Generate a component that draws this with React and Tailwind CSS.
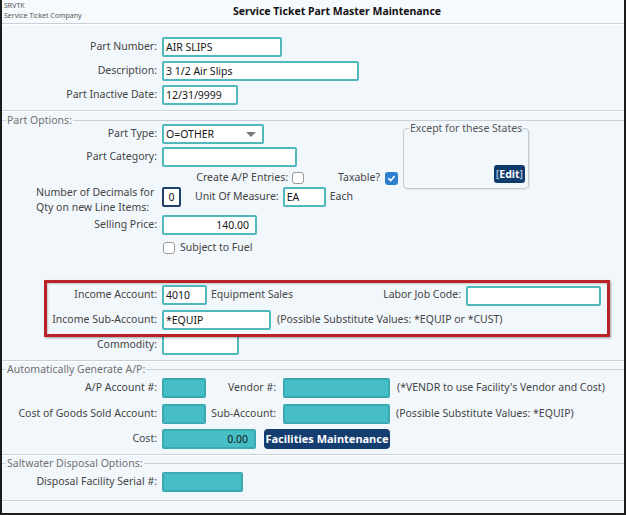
import React from 'react';

// Part master maintenance form
const lineColor = 'bg-[#c9d0d7]';

function Separator({ className = '' }) {
  return <div className={`h-[2px] border-t border-[#c9d0d7] border-b border-b-white ${className}`} />;
}

function Legend({ title, className = '' }) {
  return (
    <div className={`flex items-center h-[12px] ${className}`}>
      <div className={`w-[4px] h-px ${lineColor}`} />
      <span className="px-px text-[10.5px] leading-[12px] text-[#707070]">{title}</span>
      <div className={`flex-1 h-px ${lineColor}`} />
    </div>
  );
}

function Label({ children, className = 'w-[155px]' }) {
  return <span className={`shrink-0 text-right mr-[5px] text-[10.5px] text-[#444] ${className}`}>{children}</span>;
}

function Field({ value = '', w, right = false, teal = false }) {
  const tone = teal
    ? 'bg-[#47bec5] border-[#3aa9b1]'
    : 'bg-white border-[#4fb9bb]';
  return (
    <div
      className={`h-[20px] shrink-0 border-2 rounded-[2px] px-[2px] text-[10.5px] leading-[16px] text-[#151515] overflow-hidden ${tone} ${right ? 'text-right pr-[6px]' : ''} ${w}`}
    >
      {value}
    </div>
  );
}

function CheckBox({ checked = false }) {
  if (checked) {
    return (
      <div className="w-[13px] h-[13px] rounded-[3px] bg-[#2f7fcf] flex items-center justify-center shrink-0">
        <svg width="9" height="9" viewBox="0 0 10 10">
          <path d="M2 5.2 L4.2 7.3 L8 2.8" fill="none" stroke="white" strokeWidth="1.8" strokeLinecap="round" strokeLinejoin="round" />
        </svg>
      </div>
    );
  }
  return <div className="w-[12px] h-[12px] rounded-[3px] border border-[#9a9a9a] bg-white shrink-0" />;
}

export default function App() {
  return (
    <div className="relative w-[626px] h-[515px] overflow-hidden whitespace-nowrap bg-[#f2f7fc] border-x-2 border-b-2 border-[#1c1c1c] font-['Noto_Sans',sans-serif] text-[#444]">
      {/* header */}
      <div className="flex items-start h-[23px] bg-[#f7fafd]">
        <div className="w-[231px] shrink-0 pl-[2px] pt-px text-[7px] leading-[10px] text-[#555]">
          <div>SRVTK</div>
          <div>Service Ticket Company</div>
        </div>
        <div className="pt-[4px] text-[10.5px] leading-[15px] font-bold text-[#111]">Service Ticket Part Master Maintenance</div>
      </div>
      <Separator />

      {/* part header fields */}
      <div className="flex items-center mt-[12px]">
        <Label>Part Number:</Label>
        <Field value="AIR SLIPS" w="w-[120px]" />
      </div>
      <div className="flex items-center mt-[4px]">
        <Label>Description:</Label>
        <Field value="3 1/2 Air Slips" w="w-[197px]" />
      </div>
      <div className="flex items-center mt-[4px]">
        <Label>Part Inactive Date:</Label>
        <Field value="12/31/9999" w="w-[76px]" />
      </div>
      <Separator className="mt-[5px]" />

      {/* part options */}
      <Legend title="Part Options:" className="mt-[2px]" />
      <div className="flex items-start -mt-[2px]">
        <div className="w-[401px] shrink-0">
          <div className="flex items-center">
            <Label>Part Type:</Label>
            <div className="relative h-[20px] w-[102px] border-2 border-[#4fb9bb] rounded-[2px] bg-white px-[2px] text-[10.5px] leading-[16px] text-[#151515]">
              O=OTHER
              <div className="absolute right-[6px] top-[6px] w-0 h-0 border-x-[5px] border-x-transparent border-t-[5px] border-t-[#7a7a7a]" />
            </div>
          </div>
          <div className="flex items-center mt-[3px]">
            <Label>Part Category:</Label>
            <Field w="w-[135px]" />
          </div>
          <div className="flex items-center h-[14px] mt-[4px]">
            <span className="w-[286px] shrink-0 text-right text-[10.5px] text-[#444]">Create A/P Entries:</span>
            <div className="ml-[4px]"><CheckBox /></div>
            <span className="ml-[34px] text-[10.5px] text-[#444]">Taxable?</span>
            <div className="ml-[5px]"><CheckBox checked /></div>
          </div>
        </div>
        <div className="relative mt-[4px] -mb-[8px] w-[126px] h-[61px] border border-[#c4c9ce] rounded-[4px] shadow-[1px_1px_0_#e4e8ec]">
          <span className="absolute -top-[8px] left-[5px] px-px bg-[#f2f7fc] text-[10.5px] leading-[14px] text-[#555]">Except for these States</span>
          <div className="absolute right-[3px] bottom-[5px] h-[18px] px-[2px] rounded-[3px] bg-[#0f3b6a] text-[10.5px] leading-[18px] font-bold text-white">
            <span className="text-[#9fb4cc]">[</span>Edit<span className="text-[#9fb4cc]">]</span>
          </div>
        </div>
      </div>

      <div className="flex items-start">
        <span className="ml-[34px] w-[121px] shrink-0 text-[10.5px] leading-[15px] text-[#444] mr-[5px]">
          Number of Decimals for
          <br />
          Qty on new Line Items:
        </span>
        <div className="mt-[2px] h-[20px] w-[19px] border-2 border-[#1f3f6d] rounded-[2px] bg-white text-center text-[10.5px] leading-[16px] text-[#151515]">0</div>
        <span className="mt-[4px] ml-[14px] text-[10.5px] text-[#444]">Unit Of Measure:</span>
        <div className="mt-[2px] ml-[4px]"><Field value="EA" w="w-[43px]" /></div>
        <span className="mt-[4px] ml-[4px] text-[10.5px] text-[#444]">Each</span>
      </div>
      <div className="flex items-center">
        <Label>Selling Price:</Label>
        <Field value="140.00" w="w-[95px]" right />
      </div>
      <div className="flex items-center h-[13px] mt-[6px] pl-[161px]">
        <CheckBox />
        <span className="ml-[5px] text-[10.5px] text-[#444]">Subject to Fuel</span>
      </div>

      {/* income */}
      <div className="flex items-center mt-[30px]">
        <Label>Income Account:</Label>
        <Field value="4010" w="w-[45px]" />
        <span className="ml-[4px] w-[158px] text-[10.5px] text-[#444]">Equipment Sales</span>
        <Label className="w-[92px]">Labor Job Code:</Label>
        <div className="mt-[2px]"><Field w="w-[135px]" /></div>
      </div>
      <div className="flex items-center mt-[4px]">
        <Label>Income Sub-Account:</Label>
        <Field value="*EQUIP" w="w-[109px]" />
        <span className="ml-[6px] text-[10.5px] text-[#444]">(Possible Substitute Values: *EQUIP or *CUST)</span>
      </div>
      <div className="flex items-center mt-[5px]">
        <Label>Commodity:</Label>
        <Field w="w-[77px]" />
      </div>
      <Separator className="mt-[5px]" />

      {/* automatically generate a/p */}
      <Legend title="Automatically Generate A/P:" className="mt-px" />
      <div className="flex items-center mt-[3px]">
        <Label>A/P Account #:</Label>
        <Field teal w="w-[44px]" />
        <Label className="w-[70px] mr-[7px]">Vendor #:</Label>
        <Field teal w="w-[107px]" />
        <span className="ml-[7px] text-[10.5px] text-[#444]">(*VENDR to use Facility's Vendor and Cost)</span>
      </div>
      <div className="flex items-center mt-[6px]">
        <Label>Cost of Goods Sold Account:</Label>
        <Field teal w="w-[44px]" />
        <Label className="w-[70px] mr-[7px]">Sub-Account:</Label>
        <Field teal w="w-[107px]" />
        <span className="ml-[6px] text-[10.5px] text-[#444]">(Possible Substitute Values: *EQUIP)</span>
      </div>
      <div className="flex items-center mt-[5px]">
        <Label>Cost:</Label>
        <Field teal value="0.00" w="w-[94px]" right />
        <div className="ml-[8px] h-[20px] w-[126px] rounded-[4px] bg-[#143e6f] text-center text-[11px] leading-[20px] font-bold text-white">Facilities Maintenance</div>
      </div>
      <Separator className="mt-[5px]" />

      {/* saltwater disposal */}
      <Legend title="Saltwater Disposal Options:" className="mt-px" />
      <div className="flex items-center mt-[3px]">
        <Label>Disposal Facility Serial #:</Label>
        <Field teal w="w-[81px]" />
      </div>
      <Separator className="mt-[8px]" />

      {/* highlight annotation */}
      <div className="absolute left-[42px] top-[280px] w-[566px] h-[57px] border-[3px] border-[#b92328] shadow-[1px_1px_2px_rgba(0,0,0,0.35),inset_1px_1px_2px_rgba(0,0,0,0.2)] pointer-events-none" />
    </div>
  );
}
